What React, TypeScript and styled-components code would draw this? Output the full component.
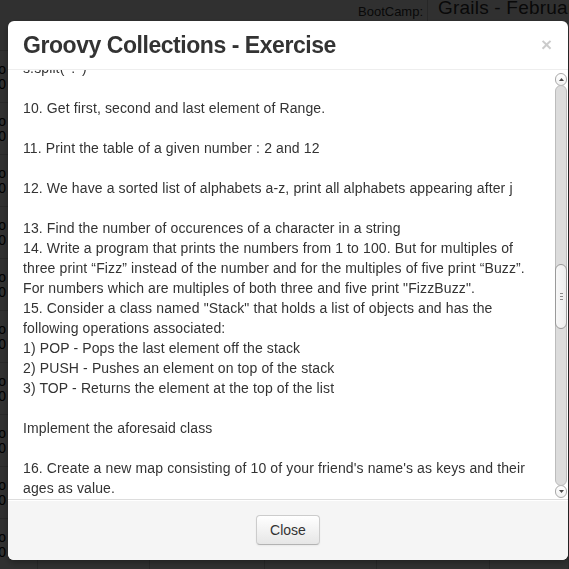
import React, { useLayoutEffect, useRef } from "react";
import styled, { createGlobalStyle } from "styled-components";

const GlobalStyle = createGlobalStyle`
  html, body {
    margin: 0;
    padding: 0;
    background: #ffffff;
    font-family: "Liberation Sans", Arial, Helvetica, sans-serif;
    overflow: hidden;
  }
`;

/* ---------- page behind the modal ---------- */

const Page = styled.div`
  width: 569px;
  height: 569px;
  overflow: hidden;
  color: #333;
`;

const TopBar = styled.div`
  display: flex;
  align-items: flex-start;
  height: 22px;
  padding-left: 358px;
  white-space: nowrap;
`;

const NavLabel = styled.span`
  font-size: 13px;
  line-height: 20px;
  padding: 2px 4px 0 0;
  border-right: 1px solid #cfcfcf;
`;

const NavValue = styled.span`
  font-size: 19px;
  line-height: 16px;
  padding-left: 10px;
  letter-spacing: 0.2px;
`;

const Table = styled.div`
  margin-top: 28px;
  display: flex;
  flex-direction: column;
`;

const Row = styled.div`
  display: grid;
  grid-template-columns: 38px 112px 115px 112px 113px 79px;
  height: 52px;
  border-top: 1px solid #d6d6d6;
  box-sizing: border-box;
`;

const Cell = styled.div`
  border-right: 1px solid #d6d6d6;
`;

const EdgeCell = styled(Cell)`
  display: flex;
  flex-direction: column;
  padding-top: 11px;
`;

const EdgeText = styled.span`
  width: 6px;
  overflow: hidden;
  direction: rtl;
  white-space: nowrap;
  font-size: 14px;
  line-height: 15px;
  color: #000;
`;

const Backdrop = styled.div`
  position: fixed;
  inset: 0;
  background: rgba(0, 0, 0, 0.81);
`;

/* ---------- modal ---------- */

const Modal = styled.div`
  position: fixed;
  left: 8px;
  top: 21px;
  width: 560px;
  background: #ffffff;
  border-radius: 6px;
  box-shadow: 0 3px 7px rgba(0, 0, 0, 0.3);
  display: flex;
  flex-direction: column;
`;

const Header = styled.div`
  display: flex;
  align-items: center;
  justify-content: space-between;
  padding: 9px 15px;
  border-bottom: 1px solid #eeeeee;
`;

const Title = styled.h3`
  margin: 0;
  font-size: 23px;
  letter-spacing: -0.45px;
  line-height: 30px;
  font-weight: bold;
  color: #333333;
`;

const CloseX = styled.button`
  border: 0;
  background: transparent;
  padding: 0;
  margin: 0 1px 0 0;
  font-family: "Liberation Sans", Arial, sans-serif;
  font-size: 19px;
  font-weight: bold;
  line-height: 20px;
  color: #000;
  opacity: 0.2;
  cursor: pointer;
`;

const Body = styled.div`
  display: flex;
  height: 429px;
`;

const Scroller = styled.div`
  flex: 1;
  overflow: hidden;
`;

const Content = styled.div`
  padding: 15px;
  font-size: 14px;
  letter-spacing: 0.12px;
  line-height: 20px;
  color: #333333;
`;

const Line = styled.div`
  white-space: nowrap;
  min-height: 20px;
`;

const ScrollBar = styled.div`
  width: 12px;
  margin-right: 1px;
  display: flex;
  flex-direction: column;
  padding: 3px 0 1px;
  box-sizing: border-box;
`;

const ArrowButton = styled.div`
  height: 11px;
  border: 1px solid #a9a9a9;
  border-radius: 6px;
  background: linear-gradient(#ffffff, #f1f1f1);
  display: flex;
  align-items: center;
  justify-content: center;
`;

const Track = styled.div`
  flex: 1;
  position: relative;
  background: #dcdcdc;
  border: 1px solid #bcbcbc;
  border-radius: 6px;
  margin: -1px 0;
`;

const Thumb = styled.div<{ $top: number; $height: number }>`
  position: absolute;
  left: -1px;
  right: -1px;
  top: ${(p) => p.$top}px;
  height: ${(p) => p.$height}px;
  box-sizing: border-box;
  border: 1px solid #9a9a9a;
  border-radius: 6px;
  background: linear-gradient(90deg, #f7f7f7, #ececec);
  display: flex;
  align-items: center;
  justify-content: center;
`;

const Grip = styled.div`
  width: 3px;
  height: 7px;
  background: repeating-linear-gradient(
    #8a8a8a 0,
    #8a8a8a 1px,
    transparent 1px,
    transparent 3px
  );
`;

const Footer = styled.div`
  padding: 15px;
  text-align: center;
  background: #f5f5f5;
  border-top: 1px solid #dddddd;
  border-radius: 0 0 6px 6px;
  box-shadow: inset 0 1px 0 #ffffff;
`;

const Button = styled.button`
  display: inline-block;
  box-sizing: border-box;
  height: 30px;
  padding: 4px 13px;
  font-family: "Liberation Sans", Arial, sans-serif;
  font-size: 14px;
  line-height: 20px;
  color: #333333;
  background: linear-gradient(#ffffff, #e6e6e6);
  border: 1px solid #cccccc;
  border-bottom-color: #b3b3b3;
  border-radius: 4px;
  box-shadow: inset 0 1px 0 rgba(255, 255, 255, 0.2), 0 1px 2px rgba(0, 0, 0, 0.05);
  cursor: pointer;
`;

const Arrow = ({ up }: { up?: boolean }) => (
  <svg width="5" height="3" viewBox="0 0 5 3">
    <polygon points={up ? "2.5,0 5,3 0,3" : "0,0 5,0 2.5,3"} fill="#4a4a4a" />
  </svg>
);

const SPLIT_LINE = "s.split( '.' )";

const lines: string[] = [
  "1. Create a list of numbers from 1 to 10 and print the sum of all even numbers.",
  "",
  "2. Find the maximum and minimum element of a list of integers.",
  "",
  "3. Remove all the duplicate elements from a list.",
  "",
  "4. Reverse a given list without using the reverse method.",
  "",
  "5. Sort a list of strings on the basis of their length.",
  "",
  "6. Create a map of employees and group them by their department.",
  "",
  "7. Find the sum of all the values of a map.",
  "",
  "8. Merge two lists and remove the common elements.",
  "",
  "9. Split the string \"www.tothenew.com\" into a list of strings using",
  SPLIT_LINE,
  "",
  "10. Get first, second and last element of Range.",
  "",
  "11. Print the table of a given number : 2 and 12",
  "",
  "12. We have a sorted list of alphabets a-z, print all alphabets appearing after j",
  "",
  "13. Find the number of occurences of a character in a string",
  "14. Write a program that prints the numbers from 1 to 100. But for multiples of",
  "three print \u201cFizz\u201d instead of the number and for the multiples of five print \u201cBuzz\u201d.",
  "For numbers which are multiples of both three and five print \"FizzBuzz\".",
  "15. Consider a class named \"Stack\" that holds a list of objects and has the",
  "following operations associated:",
  "1) POP - Pops the last element off the stack",
  "2) PUSH - Pushes an element on top of the stack",
  "3) TOP - Returns the element at the top of the list",
  "",
  "Implement the aforesaid class",
  "",
  "16. Create a new map consisting of 10 of your friend's name's as keys and their",
  "ages as value.",
  "",
  "17. Find all the friends whose age is greater than 25 from the above map.",
  "",
  "18. Sort the above map on the basis of the friends' ages.",
  "",
  "19. Group the friends of the above map according to their age.",
  "",
  "20. Find the friend with the maximum age.",
  "",
];

const rows = Array.from({ length: 10 }, (_, i) => [i % 2 ? "Demo" : "Info", "2010"]);

export default function App() {
  const scrollRef = useRef<HTMLDivElement>(null);
  const splitIndex = lines.indexOf(SPLIT_LINE);

  useLayoutEffect(() => {
    if (scrollRef.current) {
      scrollRef.current.scrollTop = 15 + 20 * splitIndex + 12;
    }
  }, [splitIndex]);

  return (
    <>
      <GlobalStyle />
      <Page>
        <TopBar>
          <NavLabel>BootCamp:</NavLabel>
          <NavValue>Grails - February 2013</NavValue>
        </TopBar>
        <Table>
          {rows.map((r, i) => (
            <Row key={i}>
              <EdgeCell>
                <EdgeText>{r[0]}</EdgeText>
                <EdgeText>{r[1]}</EdgeText>
              </EdgeCell>
              <Cell />
              <Cell />
              <Cell />
              <Cell />
              <Cell />
            </Row>
          ))}
        </Table>
      </Page>
      <Backdrop />
      <Modal>
        <Header>
          <Title>Groovy Collections - Exercise</Title>
          <CloseX aria-label="Close">×</CloseX>
        </Header>
        <Body>
          <Scroller ref={scrollRef}>
            <Content>
              {lines.map((l, i) => (
                <Line key={i}>{l}</Line>
              ))}
            </Content>
          </Scroller>
          <ScrollBar>
            <ArrowButton>
              <Arrow up />
            </ArrowButton>
            <Track>
              <Thumb $top={178} $height={65}>
                <Grip />
              </Thumb>
            </Track>
            <ArrowButton>
              <Arrow />
            </ArrowButton>
          </ScrollBar>
        </Body>
        <Footer>
          <Button>Close</Button>
        </Footer>
      </Modal>
    </>
  );
}
